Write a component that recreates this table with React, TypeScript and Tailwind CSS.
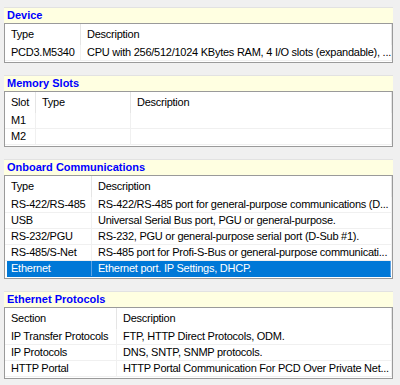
import React from "react";

type Col = { title: string; w?: number };
type Section = {
  title: string;
  cols: Col[];
  rows: string[][];
  selected?: number;
};

const sections: Section[] = [
  {
    title: "Device",
    cols: [{ title: "Type", w: 76 }, { title: "Description" }],
    rows: [["PCD3.M5340", "CPU with 256/512/1024 KBytes RAM, 4 I/O slots (expandable), ..."]],
  },
  {
    title: "Memory Slots",
    cols: [{ title: "Slot", w: 31 }, { title: "Type", w: 95 }, { title: "Description" }],
    rows: [
      ["M1", "", ""],
      ["M2", "", ""],
    ],
  },
  {
    title: "Onboard Communications",
    cols: [{ title: "Type", w: 87 }, { title: "Description" }],
    rows: [
      ["RS-422/RS-485", "RS-422/RS-485 port for general-purpose communications (D..."],
      ["USB", "Universal Serial Bus port, PGU or general-purpose."],
      ["RS-232/PGU", "RS-232, PGU or general-purpose serial port (D-Sub #1)."],
      ["RS-485/S-Net", "RS-485 port for Profi-S-Bus or general-purpose communicati..."],
      ["Ethernet", "Ethernet port. IP Settings, DHCP."],
    ],
    selected: 4,
  },
  {
    title: "Ethernet Protocols",
    cols: [{ title: "Section", w: 112 }, { title: "Description" }],
    rows: [
      ["IP Transfer Protocols", "FTP, HTTP Direct Protocols, ODM."],
      ["IP Protocols", "DNS, SNTP, SNMP protocols."],
      ["HTTP Portal", "HTTP Portal Communication For PCD Over Private Net..."],
    ],
  },
];

function Cell({ w, children, header, last, sel }: { w?: number; children: React.ReactNode; header?: boolean; last?: boolean; sel?: boolean }) {
  return (
    <div
      className={
        "shrink-0 overflow-hidden whitespace-nowrap pl-[6px] " +
        (last ? "flex-1 min-w-0 " : "") +
        (header ? "border-r border-[#e5e5e5]" : sel ? "border-r border-[#5aa3e6]" : "border-r border-[#f0f0f0]")
      }
      style={w ? { width: w } : undefined}
    >
      {children}
    </div>
  );
}

function SectionBlock({ s }: { s: Section }) {
  return (
    <div className="flex flex-col">
      <div className="h-[16px] border-t border-[#e2e2e2] bg-[#ffffe1] pl-[3px] text-[11px] font-bold leading-[15px] text-[#0000ff]">
        {s.title}
      </div>
      <div className="border border-[#9a9a9a] bg-white pb-px tracking-[-0.25px]">
        <div className="flex h-[21px] items-center text-[11px] text-black">
          {s.cols.map((c, i) => (
            <Cell key={i} w={c.w} header last={i === s.cols.length - 1}>
              <span className="leading-[21px]">{c.title}</span>
            </Cell>
          ))}
        </div>
        {s.rows.map((r, ri) => {
          const sel = s.selected === ri;
          return (
            <div
              key={ri}
              className={
                "flex h-[16px] text-[11px] leading-[15px] border-b " +
                (sel ? "bg-[#0078d7] text-white border-[#0078d7] ml-[2px] mr-[1px]" : "text-black border-[#f0f0f0]")
              }
            >
              {r.map((v, ci) => (
                <Cell
                  key={ci}
                  sel={sel}
                  w={s.cols[ci].w ? (sel && ci === 0 ? (s.cols[ci].w as number) - 2 : s.cols[ci].w) : undefined}
                  last={ci === r.length - 1}
                >
                  <span className={sel && ci === 0 ? "-ml-[2px]" : ""}>{v}</span>
                </Cell>
              ))}
            </div>
          );
        })}
      </div>
    </div>
  );
}

export default function App() {
  return (
    <div
      className="h-[385px] w-[400px] overflow-hidden bg-[#f0f0f0] pt-[7px] pl-[4px]"
      style={{ fontFamily: '"Liberation Sans", Arial, sans-serif' }}
    >
      <div className="flex w-[389px] flex-col gap-[12px]">
        {sections.map((s, i) => (
          <SectionBlock key={i} s={s} />
        ))}
      </div>
    </div>
  );
}
